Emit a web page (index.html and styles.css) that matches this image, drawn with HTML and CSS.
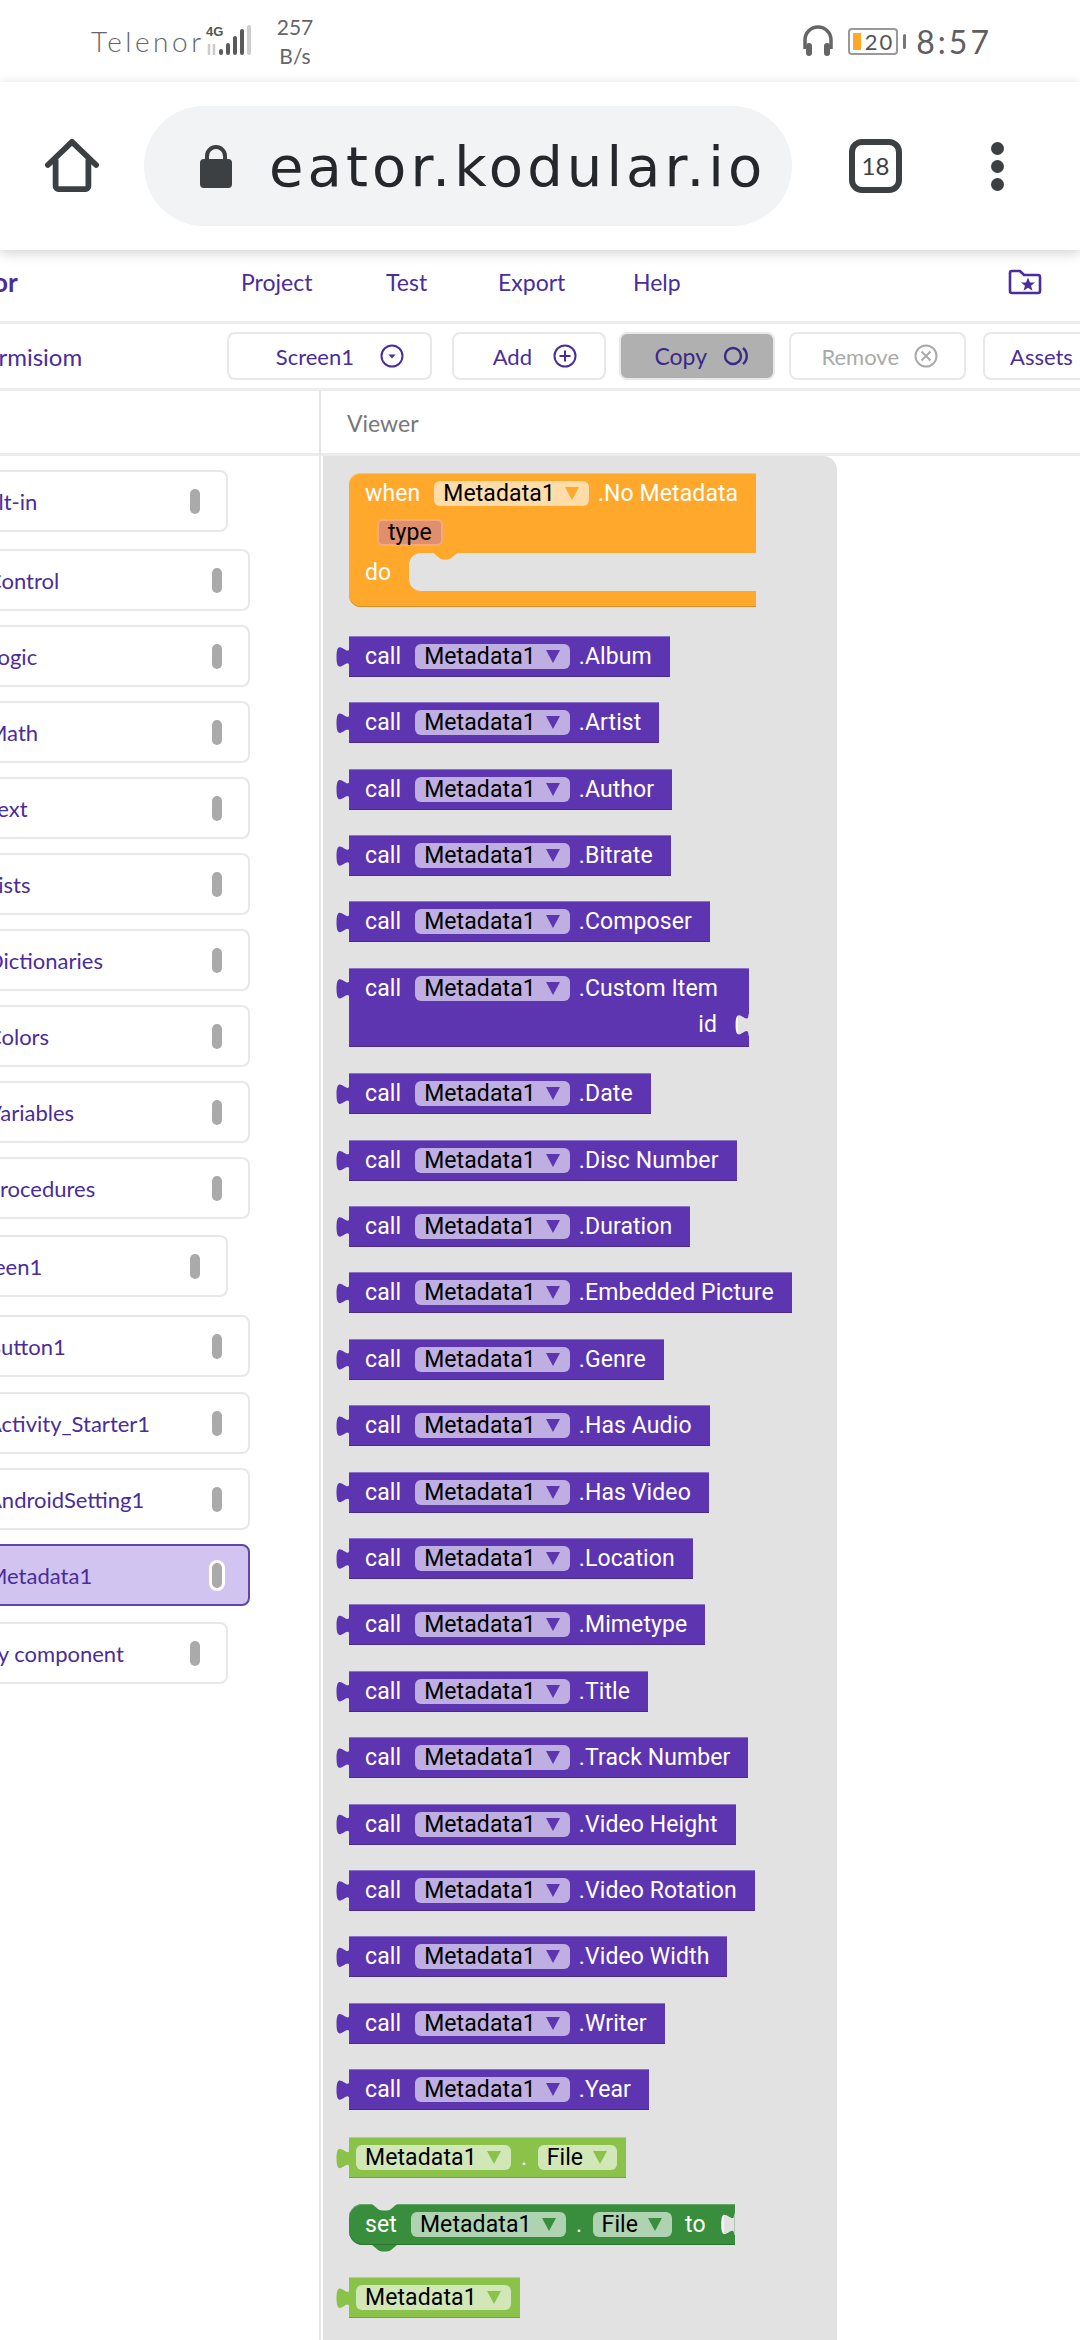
FILE: index.html
```html
<!DOCTYPE html>
<html lang="en">
<head>
    <meta charset="UTF-8">
    <meta name="viewport" content="width=device-width, initial-scale=1.0">
    <title>Kodular Creator</title>
    <link rel="stylesheet" href="styles.css">
</head>
<body>
    <div class="status-bar">
        <div class="status-left">
            <span class="carrier">Telenor</span>
            <svg class="signal" width="52" height="34" viewBox="0 0 52 34">
                <text x="0" y="12" class="net-label">4G</text>
                <path d="M3 20v11M8 20v11" stroke="#ccc" stroke-width="2.5"/>
                <rect x="13" y="25" width="4" height="6" rx="2" fill="#5a5a5a"/>
                <rect x="20" y="19" width="4" height="12" rx="2" fill="#5a5a5a"/>
                <rect x="27" y="12" width="4" height="19" rx="2" fill="#5a5a5a"/>
                <rect x="34" y="5" width="4" height="26" rx="2" fill="#5a5a5a"/>
                <rect x="41" y="1" width="4" height="30" rx="2" fill="#cfcfcf"/>
            </svg>
            <span class="speed">257<br>B/s</span>
        </div>
        <div class="status-right">
            <svg width="32" height="32" viewBox="0 0 32 32" fill="none">
                <path d="M3 24V15a13 13 0 0 1 26 0v9" stroke="#666" stroke-width="3.5"/>
                <rect x="4" y="18" width="6" height="13" rx="3" fill="#666"/>
                <rect x="22" y="18" width="6" height="13" rx="3" fill="#666"/>
            </svg>
            <div class="battery"><span class="battery-fill"></span><span class="battery-text">20</span></div>
            <span class="battery-nub"></span>
            <span class="clock">8:57</span>
        </div>
    </div>

    <div class="browser-bar">
        <svg class="home-icon" width="56" height="56" viewBox="0 0 56 56" fill="none">
            <path d="M3 27 28 3l25 24" stroke="#3c4043" stroke-width="6" stroke-linecap="round" stroke-linejoin="round"/>
            <path d="M11 21v28a3 3 0 0 0 3 3h28a3 3 0 0 0 3-3V21" stroke="#3c4043" stroke-width="6"/>
        </svg>
        <div class="url-pill">
            <svg width="34" height="44" viewBox="0 0 34 44">
                <path d="M8 18V12a9 9 0 0 1 18 0v6" fill="none" stroke="#3c4043" stroke-width="4"/>
                <rect x="1" y="15" width="32" height="29" rx="4" fill="#3c4043"/>
            </svg>
            <span class="url-text">eator.kodular.io</span>
        </div>
        <div class="tab-count">18</div>
        <div class="kebab"><span></span><span></span><span></span></div>
    </div>

    <div class="nav-bar">
        <span class="brand">Creator</span>
        <div class="nav-links">
            <span class="link-project">Project</span>
            <span class="link-test">Test</span>
            <span class="link-export">Export</span>
            <span>Help</span>
        </div>
        <svg class="folder-icon" width="34" height="26" viewBox="0 0 34 26" fill="none">
            <path d="M2 4a2 2 0 0 1 2-2h8l4 4h14a2 2 0 0 1 2 2v14a2 2 0 0 1-2 2H4a2 2 0 0 1-2-2z" stroke="#4a2c9c" stroke-width="2.6"/>
            <path d="m20 8.500 2 5h5l-4 3.200 1.500 5-4.500-3-4.500 3 1.500-5-4-3.200h5z" fill="#4a2c9c"/>
        </svg>
    </div>

    <div class="tool-bar">
        <div class="project-name"><span>Permisiom</span></div>
        <div class="tool-btn btn-screen">Screen1
            <svg width="24" height="24" viewBox="0 0 24 24" fill="none">
                <circle cx="12" cy="12" r="10.500" stroke="#4a2c9c" stroke-width="2"/>
                <path d="m8.500 10.500h7l-3.500 4z" fill="#4a2c9c"/>
            </svg>
        </div>
        <div class="tool-btn btn-add">Add
            <svg width="24" height="24" viewBox="0 0 24 24" fill="none">
                <circle cx="12" cy="12" r="10.500" stroke="#4a2c9c" stroke-width="2"/>
                <path d="M12 6.500v11M6.500 12h11" stroke="#4a2c9c" stroke-width="2"/>
            </svg>
        </div>
        <div class="tool-btn btn-copy">Copy
            <svg width="27" height="20" viewBox="0 0 27 20" fill="none">
                <circle cx="10" cy="10" r="8" stroke="#3b2a86" stroke-width="2.400"/>
                <path d="M20 2c5 4 5 12 0 16" stroke="#3b2a86" stroke-width="2.400"/>
            </svg>
        </div>
        <div class="tool-btn btn-remove">Remove
            <svg width="24" height="24" viewBox="0 0 24 24" fill="none">
                <circle cx="12" cy="12" r="10.500" stroke="#aaa" stroke-width="2"/>
                <path d="m7.500 7.500 9 9M16.500 7.500l-9 9" stroke="#aaa" stroke-width="2"/>
            </svg>
        </div>
        <div class="tool-btn btn-assets">Assets</div>
    </div>

    <div class="main">
        <div class="side-panel">
            <div class="panel-head"></div>
            <div class="palette">
                <div class="palette-item outer"><span>Built-in</span><i class="handle"></i></div>
                <div class="palette-item"><span>Control</span><i class="handle"></i></div>
                <div class="palette-item"><span>Logic</span><i class="handle"></i></div>
                <div class="palette-item"><span>Math</span><i class="handle"></i></div>
                <div class="palette-item"><span>Text</span><i class="handle"></i></div>
                <div class="palette-item"><span>Lists</span><i class="handle"></i></div>
                <div class="palette-item"><span>Dictionaries</span><i class="handle"></i></div>
                <div class="palette-item"><span>Colors</span><i class="handle"></i></div>
                <div class="palette-item"><span>Variables</span><i class="handle"></i></div>
                <div class="palette-item"><span>Procedures</span><i class="handle"></i></div>
                <div class="palette-item outer"><span>Screen1</span><i class="handle"></i></div>
                <div class="palette-item"><span>Button1</span><i class="handle"></i></div>
                <div class="palette-item"><span>Activity_Starter1</span><i class="handle"></i></div>
                <div class="palette-item"><span>AndroidSetting1</span><i class="handle"></i></div>
                <div class="palette-item selected"><span>Metadata1</span><i class="handle"></i></div>
                <div class="palette-item outer any-item"><span>Any component</span><i class="handle"></i></div>
            </div>
        </div>
        <div class="viewer">
            <div class="panel-head viewer-title">Viewer</div>
            <div class="workspace">
                <div class="event-block">
                    <div class="event-row"><span>when</span><span class="field">Metadata1<i class="arrow"></i></span><span>.No Metadata</span></div>
                    <div class="param-row"><span class="param">type</span></div>
                    <div class="do-row"><span>do</span><div class="do-slot"></div></div>
                    <div class="event-foot"></div>
                </div>

                <div class="block call"><span>call</span><span class="field">Metadata1<i class="arrow"></i></span><span>.Album</span></div>
                <div class="block call"><span>call</span><span class="field">Metadata1<i class="arrow"></i></span><span>.Artist</span></div>
                <div class="block call"><span>call</span><span class="field">Metadata1<i class="arrow"></i></span><span>.Author</span></div>
                <div class="block call"><span>call</span><span class="field">Metadata1<i class="arrow"></i></span><span>.Bitrate</span></div>
                <div class="block call"><span>call</span><span class="field">Metadata1<i class="arrow"></i></span><span>.Composer</span></div>
                <div class="block call custom">
                    <div class="custom-top"><span>call</span><span class="field">Metadata1<i class="arrow"></i></span><span>.Custom Item</span></div>
                    <div class="custom-arg"><span>id</span><i class="socket"></i></div>
                </div>
                <div class="block call"><span>call</span><span class="field">Metadata1<i class="arrow"></i></span><span>.Date</span></div>
                <div class="block call"><span>call</span><span class="field">Metadata1<i class="arrow"></i></span><span>.Disc Number</span></div>
                <div class="block call"><span>call</span><span class="field">Metadata1<i class="arrow"></i></span><span>.Duration</span></div>
                <div class="block call"><span>call</span><span class="field">Metadata1<i class="arrow"></i></span><span>.Embedded Picture</span></div>
                <div class="block call"><span>call</span><span class="field">Metadata1<i class="arrow"></i></span><span>.Genre</span></div>
                <div class="block call"><span>call</span><span class="field">Metadata1<i class="arrow"></i></span><span>.Has Audio</span></div>
                <div class="block call"><span>call</span><span class="field">Metadata1<i class="arrow"></i></span><span>.Has Video</span></div>
                <div class="block call"><span>call</span><span class="field">Metadata1<i class="arrow"></i></span><span>.Location</span></div>
                <div class="block call"><span>call</span><span class="field">Metadata1<i class="arrow"></i></span><span>.Mimetype</span></div>
                <div class="block call"><span>call</span><span class="field">Metadata1<i class="arrow"></i></span><span>.Title</span></div>
                <div class="block call"><span>call</span><span class="field">Metadata1<i class="arrow"></i></span><span>.Track Number</span></div>
                <div class="block call"><span>call</span><span class="field">Metadata1<i class="arrow"></i></span><span>.Video Height</span></div>
                <div class="block call"><span>call</span><span class="field">Metadata1<i class="arrow"></i></span><span>.Video Rotation</span></div>
                <div class="block call"><span>call</span><span class="field">Metadata1<i class="arrow"></i></span><span>.Video Width</span></div>
                <div class="block call"><span>call</span><span class="field">Metadata1<i class="arrow"></i></span><span>.Writer</span></div>
                <div class="block call"><span>call</span><span class="field">Metadata1<i class="arrow"></i></span><span>.Year</span></div>

                <div class="block getter"><span class="field">Metadata1<i class="arrow"></i></span><span class="dot">.</span><span class="field">File<i class="arrow"></i></span></div>
                <div class="block setter"><span class="set-label">set</span><span class="field">Metadata1<i class="arrow"></i></span><span class="dot">.</span><span class="field">File<i class="arrow"></i></span><span class="to-label">to</span><i class="socket"></i></div>
                <div class="block getter"><span class="field">Metadata1<i class="arrow"></i></span></div>
            </div>
        </div>
    </div>
</body>
</html>
```

FILE: styles.css
```css
* {
    box-sizing: border-box;
}
html, body {
    margin: 0;
    padding: 0;
}
body {
    width: 1080px;
    height: 2340px;
    overflow: hidden;
    background-color: white;
    font-family: 'Lato', 'Liberation Sans', sans-serif;
    color: #4a2c9c;
}

/* phone status bar */
.status-bar {
    height: 82px;
    display: flex;
    justify-content: space-between;
    align-items: center;
    padding: 0 88px 0 91px;
    color: #666;
}
.status-left, .status-right {
    display: flex;
    align-items: center;
}
.carrier {
    font-size: 28px;
    font-weight: 300;
    letter-spacing: 3.5px;
    width: 115px;
    white-space: nowrap;
}
.net-label {
    font: bold 13px 'Liberation Sans', sans-serif;
    fill: #555;
}
.speed {
    margin-left: 16px;
    font-size: 21px;
    line-height: 29px;
    text-align: center;
    width: 42px;
}
.battery {
    position: relative;
    width: 50px;
    height: 27px;
    margin-left: 14px;
    border: 2px solid #999;
    border-radius: 4px;
    font-size: 22px;
    line-height: 23px;
    text-align: right;
    padding-right: 2px;
    color: #555;
}
.battery-fill {
    position: absolute;
    left: 3px;
    top: 3px;
    width: 8px;
    height: 17px;
    background-color: #ffa726;
}
.battery-text {
    position: relative;
    letter-spacing: 2px;
}
.battery-nub {
    width: 3px;
    height: 15px;
    margin-left: 5px;
    background-color: #777;
    border-radius: 2px;
}
.clock {
    margin-left: 10px;
    font-size: 32px;
    letter-spacing: 3px;
    color: #5f5f5f;
}

/* browser toolbar */
.browser-bar {
    height: 168px;
    display: flex;
    align-items: center;
    padding: 0 0 0 45px;
    position: relative;
    z-index: 1;
    box-shadow: 0 3px 12px rgba(0,0,0,0.18);
    background-color: white;
}
.home-icon {
    width: 54px;
}
.url-pill {
    width: 648px;
    height: 120px;
    margin-left: 45px;
    border-radius: 60px;
    background-color: #f1f3f4;
    display: flex;
    align-items: center;
    padding-left: 55px;
    gap: 36px;
}
.url-text {
    font-family: 'DejaVu Sans', sans-serif;
    font-size: 56px;
    letter-spacing: 4.1px;
    color: #24272b;
    white-space: nowrap;
}
.tab-count {
    width: 53px;
    height: 54px;
    margin-left: 57px;
    border: 6px solid #3c4043;
    border-radius: 13px;
    color: #3c4043;
    font-size: 24px;
    text-align: center;
    line-height: 41px;
}
.kebab {
    margin-left: 89px;
    display: flex;
    flex-direction: column;
    gap: 5px;
}
.kebab span {
    width: 13px;
    height: 13px;
    border-radius: 50%;
    background-color: #3c4043;
}

/* kodular nav */
.nav-bar {
    height: 74px;
    display: flex;
    align-items: center;
    padding-bottom: 8px;
    border-bottom: 3px solid #ececec;
    font-size: 23px;
}
.brand {
    width: 241px;
    margin-left: -70px;
    flex: none;
    font-size: 26px;
    font-weight: bold;
}
.nav-links {
    display: flex;
    margin-left: 70px;
}
.link-project {
    width: 145px;
}
.link-test {
    width: 112px;
}
.link-export {
    width: 135px;
}
.folder-icon {
    position: absolute;
    left: 1008px;
    top: 269px;
}
.tool-bar {
    height: 67px;
    display: flex;
    align-items: center;
    gap: 17px;
    border-bottom: 3px solid #ececec;
    font-size: 22px;
    overflow: hidden;
}
.project-name {
    width: 210px;
    flex: none;
    overflow: hidden;
}
.project-name span {
    margin-left: -28px;
    display: block;
    font-size: 24px;
}
.tool-btn {
    height: 48px;
    flex: none;
    display: flex;
    align-items: center;
    justify-content: flex-end;
    gap: 21px;
    padding-right: 27px;
    border: 2px solid #e8e8e8;
    border-radius: 8px;
    background-color: white;
}
.btn-screen {
    width: 205px;
    gap: 26px;
    padding-right: 26px;
}
.btn-add {
    width: 154px;
    margin-left: 3px;
}
.btn-copy {
    width: 156px;
    margin-left: -4px;
    background-color: #b0b0b0;
    color: #3b2a86;
    padding-right: 23px;
    gap: 16px;
    font-size: 23px;
}
.btn-remove {
    width: 177px;
    margin-left: -3px;
    color: #aaa;
    padding-right: 26px;
    gap: 15px;
}
.btn-assets {
    width: 140px;
    justify-content: flex-start;
    padding-left: 25px;
}

/* two columns */
.main {
    display: flex;
    height: 1949px;
}
.side-panel {
    width: 321px;
    flex: none;
    border-right: 2px solid #e6e6e6;
}
.panel-head {
    height: 65px;
    border-bottom: 3px solid #ececec;
}
.viewer {
    flex: 1;
}
.viewer-title {
    padding: 18px 0 0 26px;
    font-size: 23px;
    color: #777;
}
.palette {
    padding-top: 14px;
    display: flex;
    flex-direction: column;
    gap: 14px;
    font-size: 22px;
    overflow: hidden;
}
.palette-item {
    width: 260px;
    height: 62px;
    flex: none;
    display: flex;
    align-items: center;
    justify-content: space-between;
    padding-right: 26px;
    border: 2px solid #e8e8e8;
    border-radius: 8px;
    margin-left: -10px;
    background-color: white;
}
.palette-item span {
    margin-left: -5px;
    white-space: nowrap;
}
.palette-item.outer {
    width: 238px;
}
.palette-item.outer span {
    margin-left: -28px;
}
.palette-item.outer:first-child span {
    margin-left: -25px;
}
.palette-item.any-item span {
    margin-left: -21px;
}
.palette-item:nth-child(1) {
    margin-bottom: 3px;
}
.palette-item:nth-child(10) {
    margin-bottom: 2px;
}
.palette-item:nth-child(11) {
    margin-bottom: 4px;
}
.palette-item:nth-child(12) {
    margin-bottom: 1px;
}
.palette-item:nth-child(15) {
    margin-bottom: 2px;
}
.handle {
    width: 10px;
    height: 25px;
    flex: none;
    border-radius: 5px;
    background-color: #aaa;
}
.selected {
    background-color: #d1c4f0;
    border-color: #5e47a8;
}
.selected .handle {
    box-sizing: content-box;
    border: 3px solid white;
    margin-right: -3px;
    border-radius: 8px;
}

/* blocks */
.workspace {
    width: 514px;
    height: 1884px;
    margin-left: 2px;
    padding: 17px 0 0 26px;
    background-color: #e2e2e2;
    border-top-right-radius: 14px;
    display: flex;
    flex-direction: column;
    align-items: flex-start;
    gap: 25.4px;
    font-family: 'Roboto', 'Liberation Sans', sans-serif;
    font-size: 23px;
    letter-spacing: 0.1px;
    color: white;
    overflow: hidden;
}
.block {
    position: relative;
    height: 41px;
    flex: none;
    display: flex;
    align-items: center;
    white-space: nowrap;
    padding: 0 18px 0 16px;
}
.block::before {
    content: "";
    position: absolute;
    left: -13px;
    top: 10px;
    width: 14px;
    height: 22px;
    background-color: inherit;
    clip-path: path("M14 0 H13.5 c0,14.700 -13,-11.700 -13,11 s13,-3.700 13,11 H14 Z");
}
.call {
    background-color: #5e35b1;
    box-shadow: inset 0 1px 0 #8e72c8, inset 0 -1px 0 #4b2a8e;
}
.call + .getter {
    margin-top: 2px;
}
.field {
    height: 25px;
    display: inline-flex;
    align-items: center;
    padding: 0 10px 0 9px;
    margin: 0 9px 0 14px;
    border-radius: 6px;
    color: black;
}
.call .field {
    background-color: #bfaee1;
}
.arrow {
    width: 0;
    height: 0;
    margin-left: 10px;
    border-left: 7px solid transparent;
    border-right: 7px solid transparent;
    border-top: 13px solid #5e35b1;
}
.custom {
    height: 79px;
    margin-bottom: 1px;
    flex-direction: column;
    align-items: stretch;
    padding: 0;
}
.custom-top {
    height: 41px;
    display: flex;
    align-items: center;
    padding: 0 31px 0 16px;
}
.custom-arg {
    display: flex;
    justify-content: flex-end;
    align-items: center;
    gap: 18px;
    height: 38px;
    padding-bottom: 6px;
}
.socket {
    width: 14px;
    height: 22px;
    flex: none;
    background: linear-gradient(to right, #f6f6f6 3px, #e2e2e2 3px);
    clip-path: path("M14 0 H13.5 c0,14.700 -13,-11.700 -13,11 s13,-3.700 13,11 H14 Z");
}

/* event block */
.event-block {
    width: 407px;
    flex: none;
    margin: 0 0 3.500px 0;
    background-color: #ffa82b;
    border-radius: 12px 0 0 12px;
    box-shadow: inset 0 1px 0 #ffc266, inset 0 -1px 0 #d98e20;
    white-space: nowrap;
}
.event-row {
    height: 41px;
    display: flex;
    align-items: center;
    padding-left: 16px;
}
.event-row .field {
    background-color: #ffdca8;
    margin: 0 9px 0 14px;
}
.event-row .arrow {
    border-top-color: #ffa82b;
}
.param-row {
    height: 36px;
    margin-bottom: 3px;
    padding-left: 28px;
    display: flex;
    align-items: center;
}
.param {
    height: 27px;
    padding: 0 9px;
    color: black;
    line-height: 23px;
    border-radius: 6px;
    background-color: #e08f6c;
    border: 2px solid #f2ab80;
}
.do-row {
    display: flex;
    align-items: center;
    padding-left: 16px;
    height: 38px;
}
.do-slot {
    position: relative;
    flex: 1;
    height: 38px;
    margin-left: 18px;
    background-color: #e2e2e2;
    border-radius: 12px 0 0 12px;
}
.do-slot::before {
    content: "";
    position: absolute;
    left: 24px;
    top: 0;
    width: 24px;
    height: 7px;
    background-color: #ffa82b;
    clip-path: path("M0 0 L6 5 C8 7 15 7 18 5 L24 0 Z");
}
.event-foot {
    height: 16px;
}

/* value blocks */
.getter {
    background-color: #8bc34a;
    box-shadow: inset 0 1px 0 #add57e, inset 0 -1px 0 #73a53a;
    padding: 0 9px 0 7px;
}
.getter .field {
    background-color: #d1e7b7;
    margin: 0;
}
.getter .arrow {
    border-top-color: #8bc34a;
}
.dot {
    width: 27px;
    text-align: center;
}
.setter {
    margin-bottom: 7px;
    background-color: #388e3c;
    border-radius: 14px 0 0 14px;
    box-shadow: inset 0 1px 0 #64a866, inset 0 -1px 0 #2d7430;
    padding: 0 0 0 16px;
}
.setter::before {
    left: 23px;
    top: 0;
    width: 25px;
    height: 7px;
    background-color: #e2e2e2;
    clip-path: path("M0 0 L6 5 C8 7 17 7 19 5 L25 0 Z");
}
.setter::after {
    content: "";
    position: absolute;
    left: 23px;
    top: 41px;
    width: 25px;
    height: 7px;
    background-color: #388e3c;
    clip-path: path("M0 0 L6 5 C8 7 17 7 19 5 L25 0 Z");
}
.setter .field {
    background-color: #afd2b1;
    margin: 0;
}
.set-label {
    margin-right: 14px;
}
.setter .arrow {
    border-top-color: #388e3c;
}
.to-label {
    margin: 0 15px 0 13px;
}
```
